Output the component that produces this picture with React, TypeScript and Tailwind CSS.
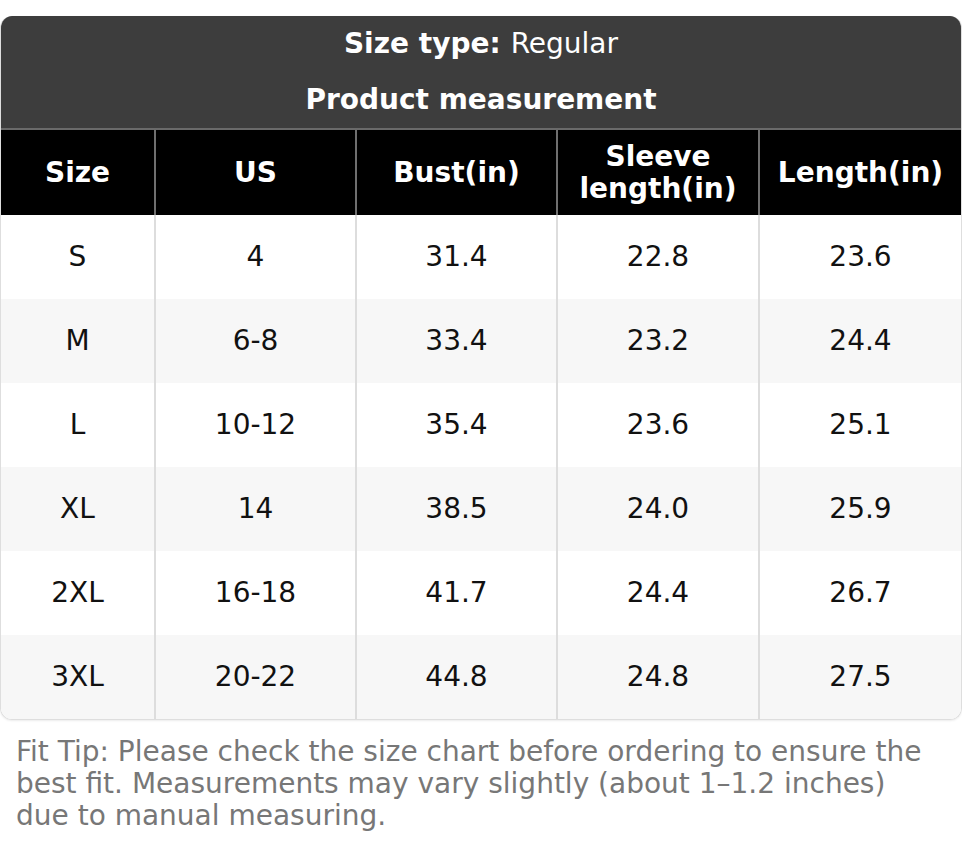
const headers = ["Size", "US", "Bust(in)", "Sleeve length(in)", "Length(in)"];

const rows = [
  ["S", "4", "31.4", "22.8", "23.6"],
  ["M", "6-8", "33.4", "23.2", "24.4"],
  ["L", "10-12", "35.4", "23.6", "25.1"],
  ["XL", "14", "38.5", "24.0", "25.9"],
  ["2XL", "16-18", "41.7", "24.4", "26.7"],
  ["3XL", "20-22", "44.8", "24.8", "27.5"],
];

const cols = "grid grid-cols-[155px_201px_201px_202px_1fr]";

export default function App() {
  return (
    <div className="bg-white pt-4 text-[28px] leading-8" style={{ fontFamily: '"DejaVu Sans", sans-serif' }}>
      <div className="rounded-xl overflow-hidden border border-t-0 border-[#dedede] shadow-[0_1px_2px_rgba(0,0,0,0.08)]">
        {/* Title */}
        <div className="bg-[#3d3d3d] text-white">
          <div className="h-14 flex items-center justify-center">
            <span className="font-bold">Size type:</span>
            <span className="ml-2.5">Regular</span>
          </div>
          <div className="h-14 flex items-center justify-center font-bold">Product measurement</div>
        </div>

        {/* Header row */}
        <div className={`${cols} bg-black text-white font-bold border-t-2 border-[#6a6a6a]`}>
          {headers.map((h, i) => (
            <div
              key={h}
              className={`h-[85px] flex items-center justify-center text-center px-2 ${i < headers.length - 1 ? "border-r-2 border-[#6f6f6f]" : ""}`}
            >
              {h === "Sleeve length(in)" ? (
                <span>Sleeve<br />length(in)</span>
              ) : (
                h
              )}
            </div>
          ))}
        </div>

        {/* Body */}
        {rows.map((r, ri) => (
          <div key={ri} className={`${cols} ${ri % 2 === 1 ? "bg-[#f7f7f7]" : "bg-white"} text-[#111]`}>
            {r.map((c, i) => (
              <div
                key={i}
                className={`h-[84px] flex items-center justify-center ${i < r.length - 1 ? "border-r-2 border-[#dddddd]" : ""}`}
              >
                {c}
              </div>
            ))}
          </div>
        ))}
      </div>

      <p className="mt-4 px-4 text-[#777777]">
        Fit Tip: Please check the size chart before ordering to ensure the best fit. Measurements may vary slightly (about 1–1.2 inches) due to manual measuring.
      </p>
    </div>
  );
}
